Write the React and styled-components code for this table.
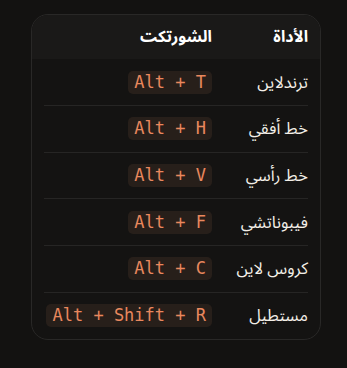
import React from "react";
import styled, { createGlobalStyle } from "styled-components";

const Global = createGlobalStyle`
  html, body { margin: 0; padding: 0; background: #131211; }
  body { font-family: "Noto Sans Arabic", "Noto Sans", "DejaVu Sans", sans-serif; }
`;

const Page = styled.div`
  padding: 14px 26px 0 31px;
  direction: rtl;
`;

const Card = styled.div`
  border: 1px solid #292827;
  border-radius: 17px;
  overflow: hidden;
  background: #141312;
`;

const Header = styled.div`
  display: grid;
  grid-template-columns: 84px 1fr;
  column-gap: 12px;
  height: 44.3px;
  align-items: center;
  padding: 0 12px;
  background: #1a1918;
`;

const HeadCell = styled.div`
  font-weight: 700;
  font-size: 16px;
  color: #ffffff;
  text-align: right;
`;

const Body = styled.div`
  padding: 0 12px;
`;

const Row = styled.div`
  display: grid;
  grid-template-columns: 84px 1fr;
  column-gap: 12px;
  align-items: center;
  box-sizing: border-box;
  height: ${(p) => (p.$last ? "46px" : "46.67px")};
  border-bottom: ${(p) => (p.$last ? "none" : "1px solid #262524")};
`;

const Tool = styled.div`
  font-size: 16.5px;
  color: #f3efe8;
  text-align: right;
`;

const KeyCell = styled.div`
  display: flex;
  justify-content: flex-start;
`;

const Kbd = styled.span`
  direction: ltr;
  font-family: "DejaVu Sans Mono", "Liberation Mono", monospace;
  font-size: 17px;
  line-height: 23px;
  padding: 0 6px;
  border-radius: 5px;
  background: #271f1a;
  color: #e9885e;
  white-space: pre;
`;

const rows = [
  ["ترندلاين", "Alt + T"],
  ["خط أفقي", "Alt + H"],
  ["خط رأسي", "Alt + V"],
  ["فيبوناتشي", "Alt + F"],
  ["كروس لاين", "Alt + C"],
  ["مستطيل", "Alt + Shift + R"],
];

export default function App() {
  return (
    <>
      <Global />
      <Page>
        <Card>
          <Header>
            <HeadCell>الأداة</HeadCell>
            <HeadCell>الشورتكت</HeadCell>
          </Header>
          <Body>
            {rows.map(([t, k], i) => (
              <Row key={t} $last={i === rows.length - 1}>
                <Tool>{t}</Tool>
                <KeyCell>
                  <Kbd>{k}</Kbd>
                </KeyCell>
              </Row>
            ))}
          </Body>
        </Card>
      </Page>
    </>
  );
}
